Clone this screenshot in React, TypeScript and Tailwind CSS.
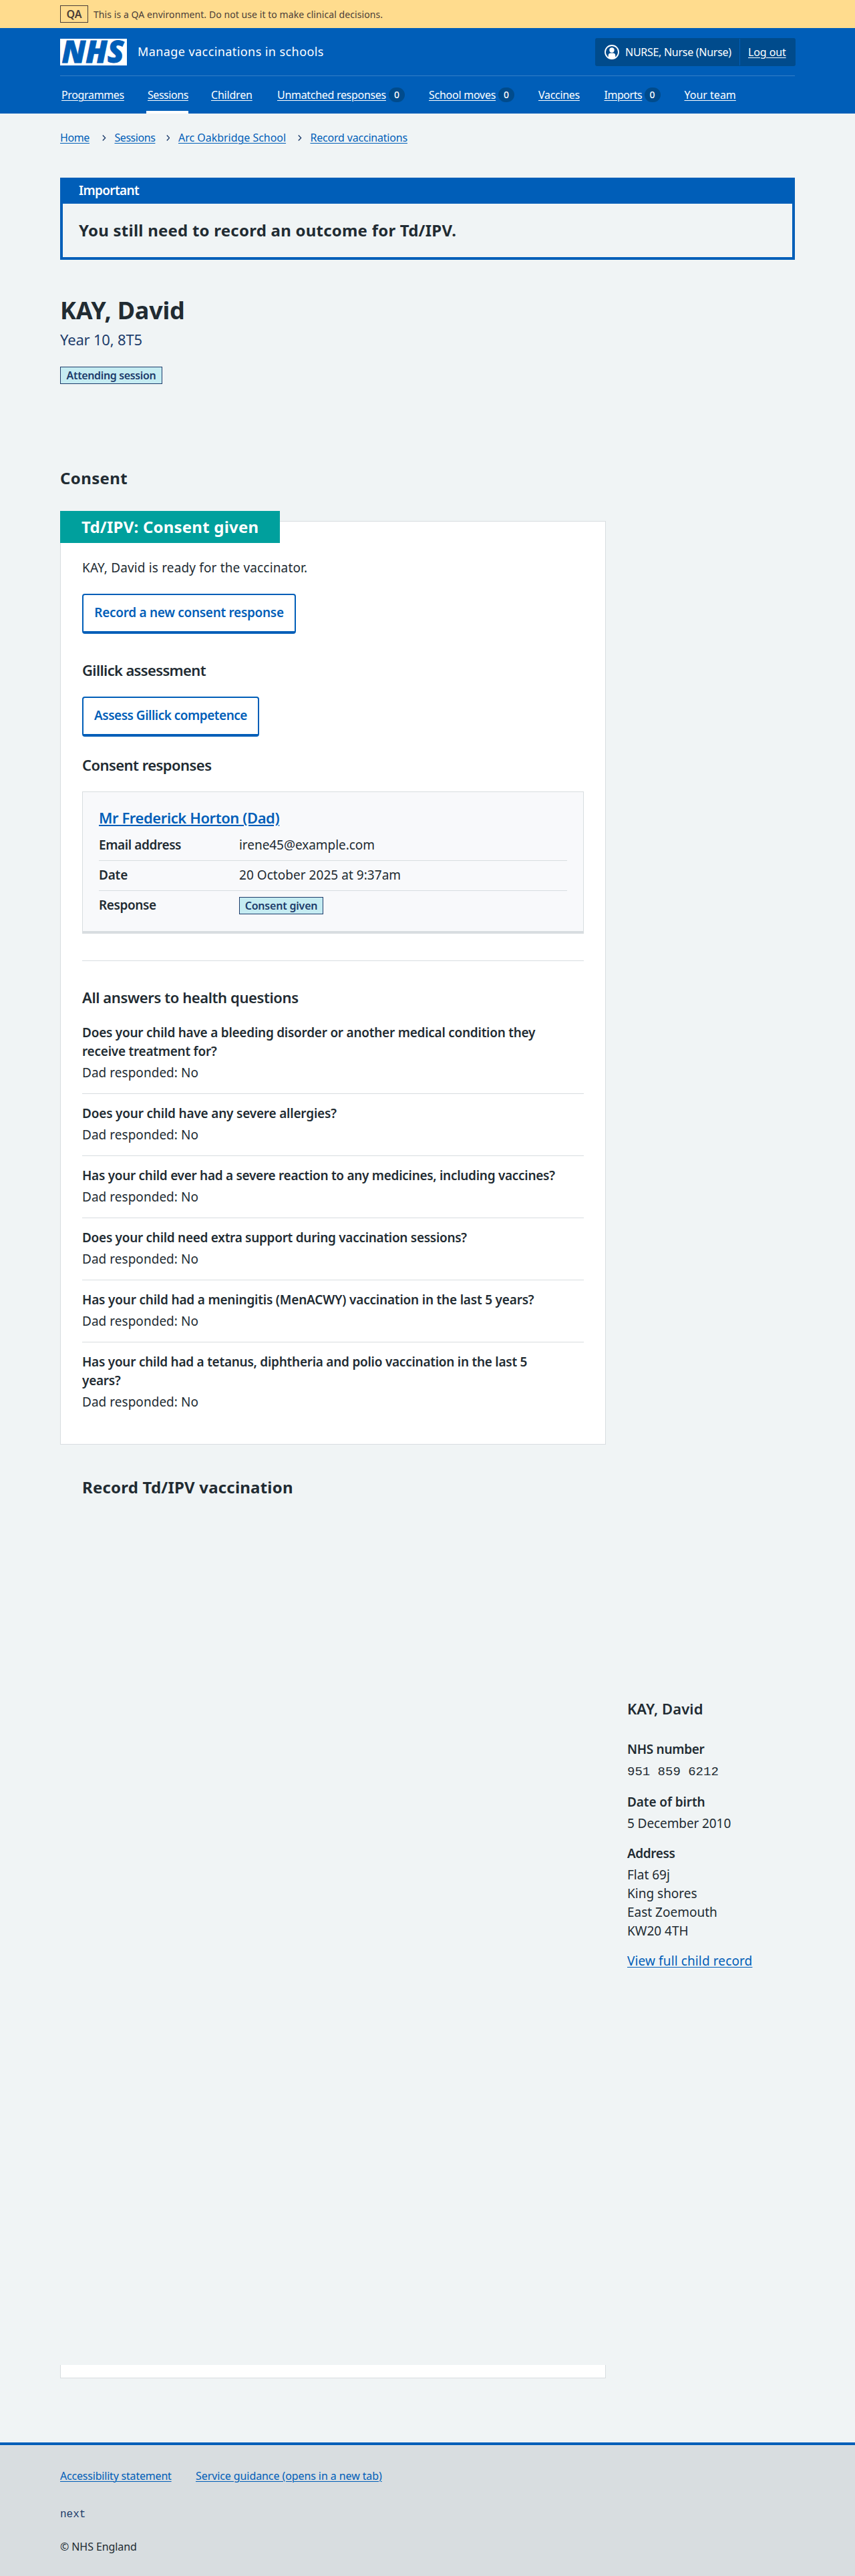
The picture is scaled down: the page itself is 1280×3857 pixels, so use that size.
import React from 'react';

const linkBase = 'underline decoration-1 underline-offset-2';

const navItems = [
  { label: 'Programmes', width: 'w-[93px]', spacing: 'tracking-[-0.35px]' },
  { label: 'Sessions', width: 'w-[59px]', spacing: 'tracking-[-0.45px]', active: true },
  { label: 'Children', width: 'w-[63px]', spacing: 'tracking-[-0.2px]' },
  { label: 'Unmatched responses', width: 'w-[163px]', spacing: 'tracking-[-0.3px]', count: 0 },
  { label: 'School moves', width: 'w-[100px]', spacing: 'tracking-[-0.25px]', count: 0 },
  { label: 'Vaccines', width: 'w-[62.5px]', spacing: 'tracking-[-0.3px]' },
  { label: 'Imports', width: 'w-[56px]', spacing: 'tracking-[-0.45px]', count: 0 },
  { label: 'Your team', width: 'w-[77px]', spacing: 'tracking-[0px]' },
];

const crumbs = [
  { label: 'Home', box: 'w-[45px] tracking-[-0.4px]' },
  { label: 'Sessions', box: 'w-[59px] tracking-[-0.45px]' },
  { label: 'Arc Oakbridge School', box: 'w-[161px] tracking-[-0.03px]' },
  { label: 'Record vaccinations', box: 'w-[146px] tracking-[-0.2px]' },
];

const questions = [
  {
    text: 'Does your child have a bleeding disorder or another medical condition they receive treatment for?',
    spacing: 'tracking-[-0.25px]',
  },
  { text: 'Does your child have any severe allergies?', spacing: 'tracking-[-0.2px]' },
  {
    text: 'Has your child ever had a severe reaction to any medicines, including vaccines?',
    spacing: 'tracking-[-0.29px]',
  },
  { text: 'Does your child need extra support during vaccination sessions?', spacing: 'tracking-[-0.29px]' },
  {
    text: 'Has your child had a meningitis (MenACWY) vaccination in the last 5 years?',
    spacing: 'tracking-[-0.2px]',
  },
  {
    text: 'Has your child had a tetanus, diphtheria and polio vaccination in the last 5 years?',
    spacing: 'tracking-[-0.26px]',
  },
];

function Logo() {
  return (
    <svg className="h-10 w-[100px] shrink-0 overflow-visible" viewBox="0 0 100 40" role="img" aria-label="NHS">
      <rect width="100" height="40" fill="#fff" />
      <text
        x="2.5"
        y="36.2"
        fontSize="46"
        textLength="93"
        lengthAdjust="spacingAndGlyphs"
        fill="#005eb8"
        stroke="#005eb8"
        strokeWidth="0.8"
        className="font-['Noto_Sans'] font-black italic"
      >
        NHS
      </text>
    </svg>
  );
}

function UserIcon() {
  return (
    <svg className="ml-[13px] size-[22px] shrink-0" viewBox="0 0 22 22" fill="none">
      <circle cx="11" cy="11" r="10" stroke="#fff" strokeWidth="1.8" />
      <circle cx="11" cy="8" r="3.7" fill="#fff" />
      <path d="M5.7 19.5V16a3.6 3.6 0 0 1 3.6-3.6h3.4a3.6 3.6 0 0 1 3.6 3.6v3.5A10 10 0 0 1 11 21a10 10 0 0 1-5.3-1.5Z" fill="#fff" />
    </svg>
  );
}

function Tag({ children, className }: { children: React.ReactNode; className: string }) {
  return (
    <strong
      className={`flex h-[26px] items-center justify-center whitespace-nowrap border border-[#1d3c6b] bg-[#c5ecf2] text-[16px] leading-6 font-semibold text-[#1d3c6b] ${className}`}
    >
      {children}
    </strong>
  );
}

function OutlineButton({ children, className }: { children: React.ReactNode; className: string }) {
  return (
    <button
      className={`flex h-[60px] justify-center whitespace-nowrap rounded border-2 border-b-4 border-[#005eb8] bg-white pt-3 text-[19px] leading-7 font-semibold text-[#005eb8] ${className}`}
    >
      {children}
    </button>
  );
}

function Header() {
  return (
    <>
      <div className="h-[42px] bg-[#ffdc8e] px-[90px] text-[#4a3d38]">
        <div className="flex h-full items-center gap-2">
          <strong className="flex h-[26px] w-[42px] items-center justify-center border border-[#4a3d38] text-[16px] leading-6 font-semibold tracking-[-0.1px]">
            QA
          </strong>
          <span className="pt-0.5 text-[14px] leading-5 tracking-[0.07px]">
            This is a QA environment. Do not use it to make clinical decisions.
          </span>
        </div>
      </div>
      <header className="h-32 bg-[#005eb8] px-[90px] text-white">
        <div className="flex h-[72px] items-start justify-between border-b border-[#337ec6] pt-4">
          <div className="flex items-center gap-4">
            <Logo />
            <span className="-mt-0.5 text-[18px] leading-[26px] tracking-[0.42px]">Manage vaccinations in schools</span>
          </div>
          <div className="flex h-10 w-[298px] items-center rounded-[2px] bg-[#004b8c] text-[16px] leading-6 ring-1 ring-[#004b8c]">
            <UserIcon />
            <span className="ml-[9px] w-[171px] whitespace-nowrap tracking-[-0.28px]">NURSE, Nurse (Nurse)</span>
            <div className="flex h-full flex-1 items-center border-l border-[#005eb8] pl-3">
              <a className={`${linkBase} whitespace-nowrap tracking-[-0.1px]`}>Log out</a>
            </div>
          </div>
        </div>
        <nav className="flex h-14 gap-9 pl-0.5 text-[16px] leading-6">
          {navItems.map((item) => (
            <div key={item.label} className="flex gap-1">
              <a className={`relative whitespace-nowrap pt-4 ${linkBase} ${item.width} ${item.spacing}`}>
                {item.label}
                {item.active && <span className="absolute -right-0.5 bottom-0 -left-0.5 h-1 bg-white" />}
              </a>
              {item.count !== undefined && (
                <span className="mt-[17px] flex h-[22px] w-6 items-center justify-center rounded-full bg-[#004b8c] text-[14px] leading-5 font-medium">
                  {item.count}
                </span>
              )}
            </div>
          ))}
        </nav>
      </header>
    </>
  );
}

function Breadcrumbs() {
  return (
    <nav className="flex items-center text-[16px] leading-6 text-[#005eb8]">
      {crumbs.map((crumb, i) => (
        <div key={crumb.label} className="flex items-center">
          {i > 0 && (
            <svg className="mr-[13px] ml-[18px] h-[9px] w-[5.5px]" viewBox="0 0 5.5 9" fill="none">
              <path d="M0.8 0.6 4.6 4.5 0.8 8.4" stroke="#1d3c6b" strokeWidth="1.4" />
            </svg>
          )}
          <a className={`${linkBase} whitespace-nowrap ${crumb.box}`}>{crumb.label}</a>
        </div>
      ))}
    </nav>
  );
}

function ConsentResponse() {
  return (
    <div className="mt-[25px] h-[213px] border border-b-4 border-[#d8dde0] bg-[#f8f9fb] px-6 pt-[23px]">
      <h4 className="text-[22px] leading-[30px] font-semibold tracking-[-0.42px] text-[#005eb8]">
        <a className="underline decoration-2 underline-offset-2">Mr Frederick Horton (Dad)</a>
      </h4>
      <dl className="mt-[5px]">
        <div className="flex border-b border-[#d8dde0] pt-[7px] pb-[9px]">
          <dt className="w-[210px] font-semibold tracking-[-0.4px]">Email address</dt>
          <dd className="tracking-[-0.05px]">irene45@example.com</dd>
        </div>
        <div className="flex border-b border-[#d8dde0] pt-[7px] pb-[9px]">
          <dt className="w-[210px] font-semibold tracking-[-0.2px]">Date</dt>
          <dd className="tracking-[0.04px]">20 October 2025 at 9:37am</dd>
        </div>
        <div className="flex pt-[7px]">
          <dt className="w-[210px] font-semibold tracking-[-0.4px]">Response</dt>
          <dd className="pt-0.5">
            <Tag className="w-[126px] tracking-[-0.2px]">Consent given</Tag>
          </dd>
        </div>
      </dl>
    </div>
  );
}

function ConsentCard() {
  return (
    <section className="mt-12 h-[1383px] border border-[#d8dde0] bg-white px-8">
      <h3 className="-mt-4 -ml-[33px] h-12 w-[329px] bg-[#00a09d] pt-[7px] pl-8 text-[24px] leading-[33px] font-bold tracking-[0.22px] whitespace-nowrap text-white">
        Td/IPV: Consent given
      </h3>
      <p className="mt-[23px] tracking-[0.15px]">KAY, David is ready for the vaccinator.</p>
      <OutlineButton className="mt-[25px] w-80 tracking-[-0.3px]">Record a new consent response</OutlineButton>
      <h4 className="mt-[39px] text-[22px] leading-[30px] font-semibold tracking-[-0.65px]">Gillick assessment</h4>
      <OutlineButton className="mt-[25px] w-[265px] tracking-[-0.5px]">Assess Gillick competence</OutlineButton>
      <h4 className="mt-[27px] text-[22px] leading-[30px] font-semibold tracking-[-0.55px]">Consent responses</h4>
      <ConsentResponse />
      <hr className="mt-10 border-[#d8dde0]" />
      <h4 className="mt-[39px] text-[22px] leading-[30px] font-semibold tracking-[-0.4px]">
        All answers to health questions
      </h4>
      <dl className="mt-[9px]">
        {questions.map((q) => (
          <div key={q.text} className="border-b border-[#d8dde0] pt-[15px] pb-[17px] last:border-b-0">
            <dt className={`max-w-[715px] font-semibold ${q.spacing}`}>{q.text}</dt>
            <dd className="mt-1 tracking-[0.03px]">Dad responded: No</dd>
          </div>
        ))}
      </dl>
    </section>
  );
}

function ChildDetails() {
  return (
    <aside className="mt-[1968px] w-[251px]">
      <h3 className="text-[22px] leading-[30px] font-semibold tracking-[0.1px]">KAY, David</h3>
      <dl className="mt-8">
        <dt className="font-semibold tracking-[-0.3px]">NHS number</dt>
        <dd className="mt-1.5 font-['Liberation_Mono',monospace]">951 859 6212</dd>
        <dt className="mt-[17px] font-semibold tracking-[-0.1px]">Date of birth</dt>
        <dd className="mt-1 tracking-[-0.1px]">5 December 2010</dd>
        <dt className="mt-[17px] font-semibold tracking-[-0.4px]">Address</dt>
        <dd className="mt-1">
          Flat 69j
          <br />
          King shores
          <br />
          East Zoemouth
          <br />
          KW20 4TH
        </dd>
      </dl>
      <a className={`mt-[17px] inline-block tracking-[0.12px] text-[#005eb8] ${linkBase}`}>View full child record</a>
    </aside>
  );
}

export default function App() {
  return (
    <div className="h-[3857px] w-[1280px] bg-[#f0f4f5] font-['Noto_Sans',sans-serif] text-[19px] leading-7 text-[#212b32]">
      <Header />
      <main className="h-[3487px] px-[90px] pt-6">
        <Breadcrumbs />
        <section className="mt-12 h-[123px] border-4 border-[#005eb8]">
          <h2 className="h-[35px] bg-[#005eb8] pt-px pl-6 font-semibold tracking-[-0.65px] text-white">Important</h2>
          <p className="pt-[23px] pl-6 text-[24px] leading-[33px] font-bold tracking-[0.23px]">
            You still need to record an outcome for Td/IPV.
          </p>
        </section>
        <h1 className="mt-[53px] text-[36px] leading-[45px] font-bold tracking-[-0.2px]">KAY, David</h1>
        <p className="mt-1.5 text-[22px] leading-[30px] tracking-[-0.19px] text-[#1d3c6b]">Year 10, 8T5</p>
        <Tag className="mt-[26px] w-[153px] tracking-[-0.36px]">Attending session</Tag>
        <div className="flex gap-8">
          <div className="w-[817px] pt-[124px]">
            <h2 className="text-[24px] leading-[33px] font-bold tracking-[0.39px]">Consent</h2>
            <ConsentCard />
            <h2 className="mt-[47px] ml-[33px] text-[24px] leading-[33px] font-bold tracking-[0.2px]">
              Record Td/IPV vaccination
            </h2>
            <div className="mt-[1298px] h-5 border border-t-0 border-[#d8dde0] bg-white" />
          </div>
          <ChildDetails />
        </div>
      </main>
      <footer className="h-[200px] border-t-4 border-[#005eb8] bg-[#d8dde0] px-[90px] pt-[34px] text-[16px] leading-6">
        <div className="flex text-[#005eb8]">
          <a className={`w-[203px] tracking-[-0.2px] ${linkBase}`}>Accessibility statement</a>
          <a className={`tracking-[-0.09px] ${linkBase}`}>Service guidance (opens in a new tab)</a>
        </div>
        <p className="mt-[34px] font-['Liberation_Mono',monospace] text-[#1d3c6b]">next</p>
        <p className="mt-6 tracking-[-0.09px]">© NHS England</p>
      </footer>
    </div>
  );
}
